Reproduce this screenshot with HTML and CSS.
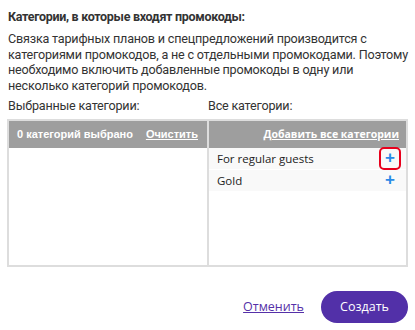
FILE: index.html
```html
<!DOCTYPE html>
<html lang="ru">
<head>
    <meta charset="UTF-8">
    <title>Категории промокодов</title>
    <link rel="stylesheet" href="styles.css">
</head>
<body>
    <div class="dialog">
        <h2 class="title">Категории, в которые входят промокоды:</h2>
        <p class="hint">Связка тарифных планов и спецпредложений производится с<br>
            категориями промокодов, а не с отдельными промокодами. Поэтому<br>
            необходимо включить добавленные промокоды в одну или<br>
            несколько категорий промокодов.</p>

        <div class="labels">
            <span>Выбранные категории:</span>
            <span>Все категории:</span>
        </div>

        <div class="picker">
            <div class="col">
                <div class="col-head">
                    <span>0 категорий выбрано</span>
                    <a href="#">Очистить</a>
                </div>
            </div>
            <div class="col">
                <div class="col-head right">
                    <a href="#">Добавить все категории</a>
                </div>
                <div class="item">
                    <span>For regular guests</span>
                    <button class="add marked">+</button>
                </div>
                <div class="item">
                    <span>Gold</span>
                    <button class="add">+</button>
                </div>
            </div>
        </div>

        <div class="actions">
            <a href="#" class="cancel">Отменить</a>
            <button class="create">Создать</button>
        </div>
    </div>
</body>
</html>
```

FILE: styles.css
```css
body {
    margin: 0;
    background: #fff;
    font-family: Roboto, Arial, sans-serif;
    color: #333;
}
.dialog {
    padding: 9px 7px 0 7px;
}
.title {
    font-size: 12.5px;
    letter-spacing: -0.3px;
    font-weight: bold;
    margin: 0 0 0 1px;
    line-height: 15px;
}
.hint {
    font-size: 12.6px;
    letter-spacing: -0.2px;
    line-height: 15.7px;
    margin: 7px -6px 0 1px;
    white-space: nowrap;
}
.labels {
    display: grid;
    grid-template-columns: 200px 1fr;
    font-size: 12.6px;
    letter-spacing: -0.2px;
    margin: 4px 0 6px 1px;
    color: #333;
}
.picker {
    display: grid;
    grid-template-columns: 198px 1fr;
    border: 2px solid #ddd;
    height: 144px;
}
.col + .col {
    border-left: 2px solid #ddd;
}
.col-head {
    background: #9e9e9e;
    color: #fff;
    font-family: Arial, "Liberation Sans", sans-serif;
    font-size: 11px;
    font-weight: bold;
    height: 27px;
    display: flex;
    align-items: center;
    justify-content: space-between;
    padding: 0 9px 0 8px;
}
.col-head.right {
    justify-content: flex-end;
    padding-right: 7px;
    font-family: "Open Sans", sans-serif;
    font-size: 10.5px;
}
.col-head a {
    color: #fff;
    text-decoration: underline;
}
.item {
    background: #f9f9f9;
    height: 21px;
    margin-bottom: 1px;
    display: flex;
    align-items: center;
    justify-content: space-between;
    padding: 0 7px 0 8px;
    font-family: "Open Sans", sans-serif;
    font-size: 11.5px;
    color: #222;
}
.add {
    border: none;
    background: none;
    color: #2a8ae6;
    font-size: 17px;
    font-weight: bold;
    line-height: 16px;
    padding: 0 2px;
    width: 18px;
    height: 19px;
    font-family: Arial, sans-serif;
}
.add.marked {
    outline: 2px solid #e8001c;
    border-radius: 3px;
}
.actions {
    display: flex;
    justify-content: flex-end;
    align-items: center;
    gap: 17px;
    margin-top: 24px;
}
.cancel {
    color: #5530a8;
    font-family: "Open Sans", sans-serif;
    font-size: 12.5px;
}
.create {
    background: #5230a8;
    color: #fff;
    border: none;
    border-radius: 16px;
    height: 32px;
    width: 87px;
    font-family: "Open Sans", sans-serif;
    font-size: 12.5px;
}
```
